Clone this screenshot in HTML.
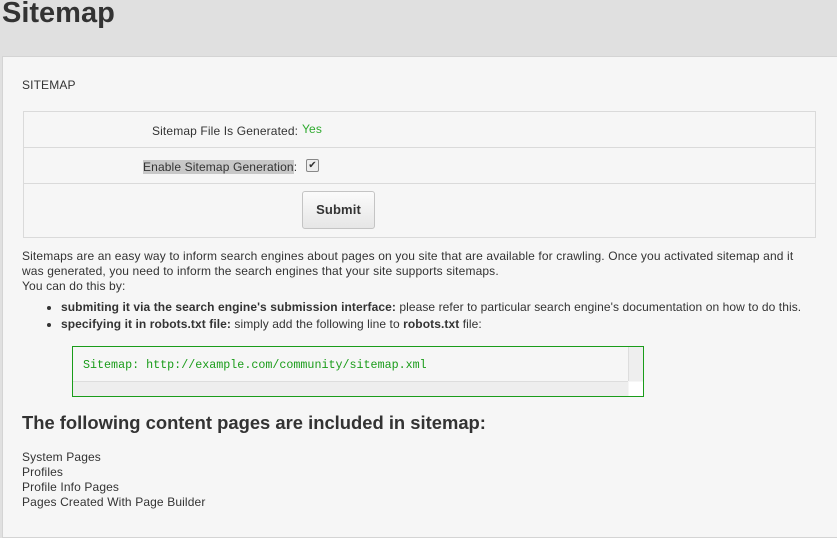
<!DOCTYPE html>
<html><head><style>
body{margin:0;width:837px;height:529px;overflow:hidden;background:#e0e0e0;font-family:"Liberation Sans",Arial,sans-serif;font-size:12px;letter-spacing:0.13px;color:#333;position:relative}
h1{position:absolute;left:2px;top:-3px;margin:0;font-size:29px;font-weight:bold;color:#333;letter-spacing:0}
.panel{position:absolute;left:2px;top:56px;width:840px;height:480px;background:#f6f6f6;border:1px solid #d4d4d4}
.abs{position:absolute}
.tbl{position:absolute;left:20px;top:54px;width:791px;height:125px;border:1px solid #dadada}
.row{position:absolute;left:0;width:791px;border-bottom:1px solid #dadada}
.btn{position:absolute;left:278px;top:79px;width:71px;height:36px;border:1px solid #c4c4c4;border-radius:3px;background:linear-gradient(#fbfbfb,#e6e6e6);font-weight:bold;font-size:13px;line-height:36px;text-align:center;color:#333}
ul{margin:0;padding-left:39px}
li{margin:0 0 2px;white-space:nowrap;letter-spacing:0.08px}
.code{position:absolute;left:69px;top:289px;width:570px;height:49px;border:1px solid #1a9c1a;background:#f6f6f6;overflow:hidden}
</style></head><body>
<h1>Sitemap</h1>
<div class="panel">
<div class="abs" style="left:19px;top:21px;">SITEMAP</div>
<div class="tbl">
 <div class="row" style="top:0;height:35px"><span class="abs" style="left:128px;top:12px">Sitemap File Is Generated:</span><span class="abs" style="left:278px;top:10px;color:#2eaa2e">Yes</span></div>
 <div class="row" style="top:36px;height:35px"><span class="abs" style="left:119px;top:12px"><span style="background:#c8c8c8">Enable Sitemap Generation</span>:</span>
 <span class="abs" style="left:282px;top:11px;width:11px;height:11px;border:1px solid #888;border-radius:2px;background:#eee;font-size:10px;line-height:11px;text-align:center">✔</span></div>
 <div class="btn">Submit</div>
</div>
<div class="abs" style="left:19px;top:192px;width:780px;line-height:15px">Sitemaps are an easy way to inform search engines about pages on you site that are available for crawling. Once you activated sitemap and it was generated, you need to inform the search engines that your site supports sitemaps.<br>You can do this by:
<ul style="margin-top:6px"><li><b>submiting it via the search engine's submission interface:</b> please refer to particular search engine's documentation on how to do this.</li>
<li><b>specifying it in robots.txt file:</b> simply add the following line to <b>robots.txt</b> file:</li></ul></div>
<div class="code">
<div class="abs" style="left:10px;top:11px;font-family:'Liberation Mono',monospace;font-size:11.7px;letter-spacing:0;color:#1a9c1a">Sitemap: http://example.com/community/sitemap.xml</div>
<div class="abs" style="left:0;top:34px;width:555px;height:15px;background:#eee;border-top:1px solid #ddd"></div>
<div class="abs" style="left:555px;top:0;width:15px;height:34px;background:#eee;border-left:1px solid #ddd"></div>
<div class="abs" style="left:556px;top:35px;width:14px;height:14px;background:#fff"></div>
</div>
<div class="abs" style="left:19px;top:355px;font-size:18.4px;font-weight:bold;letter-spacing:0;color:#333">The following content pages are included in sitemap:</div>
<div class="abs" style="left:19px;top:393px;line-height:15px">System Pages<br>Profiles<br>Profile Info Pages<br>Pages Created With Page Builder</div>
</div>
</body></html>
